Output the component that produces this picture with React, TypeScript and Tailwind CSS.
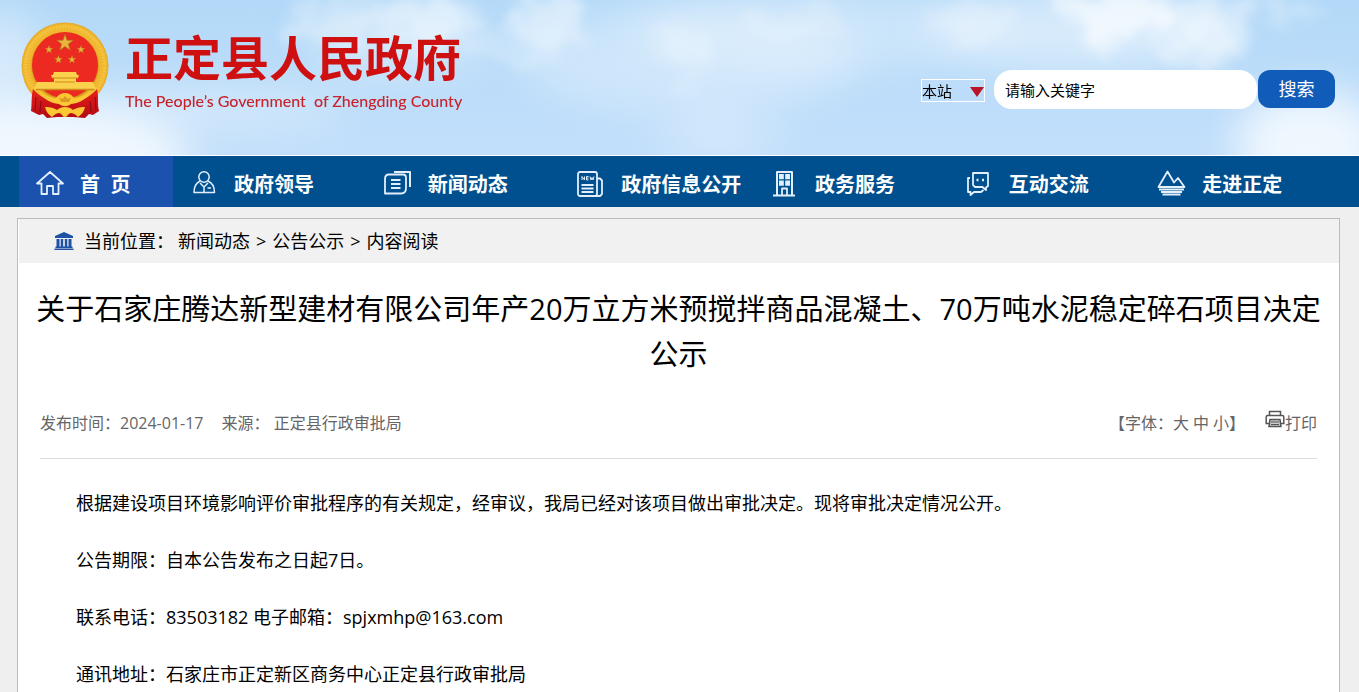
import type { ReactNode } from "react"

const LINKS = [
  { label: "政府领导", icon: <LeaderIcon /> },
  { label: "新闻动态", icon: <NewsIcon /> },
  { label: "政府信息公开", icon: <PaperIcon /> },
  { label: "政务服务", icon: <BuildingIcon /> },
  { label: "互动交流", icon: <ChatIcon /> },
  { label: "走进正定", icon: <MountainIcon /> },
]

const CRUMBS = ["新闻动态", "公告公示", "内容阅读"]

const PARAGRAPHS = [
  "根据建设项目环境影响评价审批程序的有关规定，经审议，我局已经对该项目做出审批决定。现将审批决定情况公开。",
  "公告期限：自本公告发布之日起7日。",
  "联系电话：83503182 电子邮箱：spjxmhp@163.com",
  "通讯地址：石家庄市正定新区商务中心正定县行政审批局",
]

export default function App() {
  return (
    <div lang="zh-CN" className="h-screen overflow-hidden bg-[#efefef] text-black font-['Open_Sans','Noto_Sans_CJK_SC',sans-serif]">
      <Header />

      {/* Main nav */}
      <nav className="bg-[#00508f] pl-[19px] pr-6">
        <ul className="flex h-[51px] text-white">
          <li className="w-[154px] bg-[#1a52ae]">
            <NavLink icon={<HomeIcon />}>首&nbsp;&nbsp;页</NavLink>
          </li>
          {LINKS.map(l => (
            <li key={l.label} className="flex-1">
              <NavLink icon={l.icon}>{l.label}</NavLink>
            </li>
          ))}
        </ul>
      </nav>

      <main className="ml-[17px] mr-[19px] mt-[11px] border border-[#bbbbbb] bg-white pb-10">
        <div className="ml-px flex h-11 items-center bg-[#f1f1f1] pl-[35px] text-[18px]">
          <MuseumIcon />
          <span className="ml-[10px] mr-1">当前位置：</span>
          {CRUMBS.map((c, i) => (
            <span key={c}>
              {i > 0 && <span className="mx-[6px]">&gt;</span>}
              <a href="#">{c}</a>
            </span>
          ))}
        </div>

        <h1 className="mt-[23px] px-[10px] text-center text-[29px] leading-[45px]">
          关于石家庄腾达新型建材有限公司年产20万立方米预搅拌商品混凝土、70万吨水泥稳定碎石项目决定公示
        </h1>

        <div className="mx-[22px] flex h-[83px] items-center justify-between border-b border-[#dddddd] pt-[11px] text-[16px] text-[#666666]">
          <div className="flex gap-[18px]">
            <span>发布时间：2024-01-17</span>
            <span>来源： 正定县行政审批局</span>
          </div>
          <div className="flex items-center gap-5">
            <div className="flex">
              <span>【字体：</span>
              <span className="flex gap-1">
                <button type="button">大</button>
                <button type="button">中</button>
                <button type="button">小</button>
              </span>
              <span>】</span>
            </div>
            <button type="button" className="flex items-center">
              <PrinterIcon />
              打印
            </button>
          </div>
        </div>

        <article className="mt-4 px-[22px] text-[18px] leading-[57px]">
          {PARAGRAPHS.map(p => <p key={p} className="indent-9">{p}</p>)}
        </article>
      </main>
    </div>
  )
}

function Header() {
  return (
    <header className="relative flex h-[156px] items-start justify-between overflow-hidden border-b border-white bg-[#c3e0fa] pl-[21px] pr-6">
      <Sky />
      <a href="#" className="relative flex pt-[21px]">
        <Emblem />
        <span className="ml-4 mt-1 flex flex-col text-[#cf1010]">
          <span className="text-[48px] font-bold leading-[66px]">正定县人民政府</span>
          <span className="whitespace-pre font-['Lato',sans-serif] text-[16px] font-medium leading-5 text-[#c9222b]">
            The People’s Government  of Zhengding County
          </span>
        </span>
      </a>

      <form className="relative flex items-start pt-[70px]" onSubmit={e => e.preventDefault()}>
        <div className="relative mr-[9px] mt-[9px]">
          <select aria-label="搜索范围" className="block h-[23px] w-16 appearance-none border border-white bg-transparent text-[15px] leading-5 outline-none">
            <option>本站</option>
          </select>
          <svg viewBox="0 0 14 10" className="pointer-events-none absolute right-px top-2 h-[10px] w-[14px]">
            <path d="M0 0h14L7 10z" fill="#b91528" />
          </svg>
        </div>
        <input type="text" aria-label="关键字" placeholder="请输入关键字"
          className="mr-px h-[39px] w-[263px] rounded-[18px] bg-white px-[11px] text-[15px] placeholder:text-black outline-none" />
        <button type="submit" className="h-[38px] w-[77px] rounded-xl bg-[#115cb9] text-[18px] text-white">搜索</button>
      </form>
    </header>
  )
}

function NavLink({ icon, children }: { icon: ReactNode; children: ReactNode }) {
  return (
    <a href="#" className="flex h-full items-center whitespace-nowrap pl-4 pt-[6px] text-[20px] font-bold">
      <span className="flex w-[45px] shrink-0">{icon}</span>
      {children}
    </a>
  )
}

function Sky() {
  return (
    <svg viewBox="0 0 1359 156" preserveAspectRatio="none" className="absolute inset-0 h-full w-full">
      <defs>
        <linearGradient id="sky" x1="0" y1="0" x2="0" y2="1">
          <stop offset="0" stopColor="#b3d9f8" />
          <stop offset="1" stopColor="#c2dffb" />
        </linearGradient>
        <filter id="soft" filterUnits="userSpaceOnUse" x="-100" y="-100" width="1560" height="360">
          <feGaussianBlur stdDeviation="20" />
        </filter>
        {/* ragged cloud edges */}
        <filter id="puff" filterUnits="userSpaceOnUse" x="-100" y="-100" width="1560" height="360">
          <feTurbulence type="fractalNoise" baseFrequency=".025" numOctaves="4" seed="4" result="noise" />
          <feGaussianBlur in="SourceGraphic" stdDeviation="8" result="blurred" />
          <feDisplacementMap in="blurred" in2="noise" scale="55" xChannelSelector="R" yChannelSelector="G" result="torn" />
          <feGaussianBlur in="torn" stdDeviation="3" />
        </filter>
      </defs>
      <rect width="1359" height="156" fill="url(#sky)" />
      <g fill="#fff" filter="url(#soft)">
        <ellipse cx="40" cy="165" rx="150" ry="60" opacity=".75" />
        <ellipse cx="0" cy="70" rx="45" ry="60" opacity=".4" />
        <ellipse cx="190" cy="110" rx="160" ry="25" opacity=".3" />
        <ellipse cx="400" cy="40" rx="90" ry="40" opacity=".3" />
        <ellipse cx="690" cy="60" rx="170" ry="55" opacity=".3" />
        <ellipse cx="820" cy="30" rx="190" ry="40" opacity=".3" />
        <ellipse cx="1080" cy="30" rx="150" ry="40" opacity=".45" />
        <ellipse cx="1310" cy="145" rx="75" ry="55" opacity=".75" />
        <ellipse cx="720" cy="140" rx="60" ry="22" opacity=".3" />
      </g>
      <g fill="#fff" filter="url(#puff)">
        <ellipse cx="345" cy="22" rx="45" ry="24" opacity=".3" />
        <ellipse cx="430" cy="22" rx="40" ry="32" opacity=".45" />
        <ellipse cx="295" cy="35" rx="18" ry="10" opacity=".35" />
        <ellipse cx="550" cy="18" rx="36" ry="34" opacity=".45" />
        <ellipse cx="500" cy="48" rx="35" ry="18" opacity=".2" />
        <ellipse cx="685" cy="50" rx="28" ry="28" opacity=".25" />
        <ellipse cx="800" cy="22" rx="50" ry="14" opacity=".2" />
        <ellipse cx="965" cy="22" rx="40" ry="22" opacity=".2" />
        <ellipse cx="1115" cy="14" rx="52" ry="26" opacity=".65" />
        <ellipse cx="1200" cy="22" rx="55" ry="28" opacity=".4" />
        <ellipse cx="1218" cy="50" rx="26" ry="24" opacity=".4" />
        <ellipse cx="1285" cy="6" rx="26" ry="8" opacity=".4" />
      </g>
    </svg>
  )
}

const STAR = "M0-10 2.3-3.2 9.5-3.1 3.8 1.2 5.9 8.1 0 4-5.9 8.1-3.8 1.2-9.5-3.1-2.3-3.2z"

function Emblem() {
  return (
    <svg viewBox="0 0 88 98" className="h-[98px] w-[88px]">
      <defs>
        <radialGradient id="gold" cx="50%" cy="50%" r="50%">
          <stop offset=".74" stopColor="#c98a12" />
          <stop offset=".79" stopColor="#eeb42c" />
          <stop offset=".92" stopColor="#f8c63e" />
          <stop offset="1" stopColor="#e3a622" />
        </radialGradient>
        <linearGradient id="cloth" x1="0" y1="0" x2="0" y2="1">
          <stop offset="0" stopColor="#e8201c" />
          <stop offset="1" stopColor="#b40a12" />
        </linearGradient>
      </defs>
      <circle cx="44" cy="45" r="43.5" fill="url(#gold)" />
      <circle cx="44" cy="45" r="38.5" fill="none" stroke="#dfa42a" strokeWidth="5" strokeDasharray="1 2" opacity=".35" />
      <circle cx="44" cy="44" r="33" fill="#ec2a22" />
      <g fill="#e9b43c" stroke="#a97118" strokeWidth=".7">
        <path d={STAR} transform="translate(44 22) scale(.88)" />
        <path d={STAR} transform="translate(28 28.500) scale(.42)" />
        <path d={STAR} transform="translate(60 28.500) scale(.42)" />
        <path d={STAR} transform="translate(37.500 38.500) scale(.42)" />
        <path d={STAR} transform="translate(51 38.500) scale(.42)" />
      </g>
      <path d="M33 51h22l1 3h2l-1 3h-2v4h17l3 7H13l3-7h17v-4h-2l-1-3h2z" fill="#fbd04d" />
      <path d="M31 57h26M34 61h20" stroke="#d08c1a" />
      <path d="M15 68.500h58" stroke="#d08c1a" strokeWidth="1.500" />
      {/* Ribbon */}
      <path d="M12 68c-2 8-1 16-2 22l8 4 4-1 4 4 10-1h16l12 1 4-4 4 1 6-4c-2-7 0-14-2-22-8 9-18 14-32 14S20 77 12 68z" fill="url(#cloth)" />
      <path d="M15 76l-1 13M20 80l-1 11M69 80l1 11M74 76l1 13" stroke="#8f0710" />
      <path d="M17 69c8 6 13 8 18 8 3-4 6-5 9-5s6 1 9 5c5 0 10-2 18-8-5 9-12 13-21 14-4 3-8 3-12 0-9-1-16-5-21-14z" fill="#fbc735" />
      <path d="M38 76l3 2 3-3 3 3 3-2-2 5h-8z" fill="#dd9a22" />
      <path d="M24 86c6 0 9 1 12 3 4-4 12-4 16 0 3-2 6-3 12-3-1 5-4 8-7 10-3-3-5-4-7-4-3 0-3 4-6 4s-3-4-6-4c-2 0-4 1-7 4-3-2-6-5-7-10z" fill="#fbc735" />
    </svg>
  )
}

function Glyph({ children }: { children: ReactNode }) {
  return (
    <svg viewBox="0 0 30 30" className="mb-[3px] h-[30px] w-[30px]" fill="none" stroke="#e3effc" strokeWidth="1.800" strokeLinejoin="round">
      {children}
    </svg>
  )
}

function HomeIcon() {
  return (
    <Glyph>
      <path d="M15 4 2 15.500h4.500V26h5.500v-8h6v8h5.500V15.500H28z" />
    </Glyph>
  )
}

function LeaderIcon() {
  return (
    <Glyph>
      <g strokeWidth="1.500">
        <circle cx="15" cy="9" r="5.200" />
        <path d="M11 13C7 15 5 19 5 24.500h20.500c0-5.500-2-9.500-6.500-11.500M11 15l4 4 4-4M15 19v5.500M18.500 20h3.500" />
      </g>
    </Glyph>
  )
}

function NewsIcon() {
  return (
    <Glyph>
      <path d="M6 6.500h14q3 0 3 3V20q0 5.500-5 5.500H2V11q0-4.500 4-4.500z" />
      <path d="M8 12h9.500M8 16h9.500M8 20h9.500" />
      <path d="M11 4h16v15" strokeWidth="2" />
    </Glyph>
  )
}

function PaperIcon() {
  return (
    <Glyph>
      <rect x="2" y="4" width="19" height="24" rx="2" />
      <path d="M21 10.500h3l2 2V26l-2 2h-5M5.500 17h12M5.500 20.500h12M5.500 24h12" />
      <path d="M6 12V8.500l2.500 3.500V8.500M12.500 8.500h-2V12h2M10.500 10.200h2M14 8.500l1 3.500 1-2.500 1 2.500 1-3.500" strokeWidth="1" />
    </Glyph>
  )
}

function BuildingIcon() {
  return (
    <Glyph>
      <path d="M7 27V4h15v23M3 27.500h22" strokeWidth="2" />
      <path d="M9 6h4.800v5.200H9zM15.200 6H20v5.200h-4.800zM9 12.500h4.800v5.200H9zM15.200 12.500H20v5.200h-4.800z" fill="#e3effc" stroke="none" />
      <path d="M12 27v-6.500h5V27" />
    </Glyph>
  )
}

function ChatIcon() {
  return (
    <Glyph>
      <path d="M9 5h15v13l-2 1.500V22l-3.500-3H11l-2-2z" />
      <path d="M6 10H4v14h2.500v3L10 24h7l2.500-2" />
      <path d="M12.500 12h2M18 12h2" strokeWidth="2.500" />
    </Glyph>
  )
}

function MountainIcon() {
  return (
    <Glyph>
      <path d="M1.500 19 10.500 3.500l6.500 11 4-4.500 6.500 9zM2 21.500h25M4 24h21M5.500 26.500h18" />
    </Glyph>
  )
}

function MuseumIcon() {
  return (
    <svg viewBox="0 0 20 18" className="h-[18px] w-5" fill="#1c51a4">
      <path d="M10 0 19 4v2H1V4zM2.500 7h3v8h-3zM6.700 7h2.500v8H6.700zM10.800 7h2.500v8h-2.500zM14.500 7h3v8h-3zM1.500 14.500h17v1.500h-17zM.5 16.500h19V18H.5z" />
    </svg>
  )
}

function PrinterIcon() {
  return (
    <svg viewBox="0 0 20 18" className="mb-2 h-[18px] w-5" fill="none" stroke="#555" strokeWidth="1.500">
      <path d="M4.500 5V1.500h11V5M4.500 13.500H1.200V7Q1.200 5.500 2.700 5.500h14.600q1.500 0 1.500 1.500v6.500h-3.300" />
      <path d="M5 9.500h10l1 7H4z" fill="#ccc" />
      <path d="M6 12h8M6 14.500h8" strokeWidth="1" />
    </svg>
  )
}
